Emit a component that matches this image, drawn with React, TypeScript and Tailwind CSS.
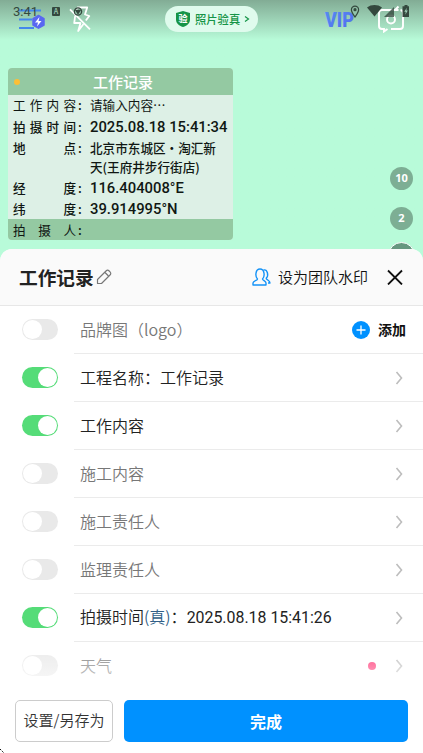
import clsx from "clsx";

interface WatermarkField {
  label: string;
  value: string;
  light?: boolean;
  className: string;
}

interface SettingItem {
  label: string;
  enabled: boolean;
  verified?: boolean;
  value?: string;
  action?: "add";
  dot?: boolean;
}

const watermarkFields: WatermarkField[] = [
  { label: "工作内容", value: "请输入内容⋯", light: true, className: "h-[21px] leading-[20px]" },
  { label: "拍摄时间", value: "2025.08.18 15:41:34", className: "h-[22px] leading-[22px]" },
  { label: "地点", value: "北京市东城区・淘汇新天(王府井步行街店)", className: "h-[39px] leading-[19px]" },
  { label: "经度", value: "116.404008°E", className: "h-[21px] leading-[22px]" },
  { label: "纬度", value: "39.914995°N", className: "h-[21px] leading-[22px]" },
];

const settings: SettingItem[] = [
  { label: "品牌图（logo）", enabled: false, action: "add" },
  { label: "工程名称：工作记录", enabled: true },
  { label: "工作内容", enabled: true },
  { label: "施工内容", enabled: false },
  { label: "施工责任人", enabled: false },
  { label: "监理责任人", enabled: false },
  { label: "拍摄时间", enabled: true, verified: true, value: "2025.08.18 15:41:26" },
  { label: "天气", enabled: false, dot: true },
];

function StatusBar() {
  return (
    <div className="absolute inset-x-0 top-0 h-6 text-[#34483e]">
      <span className="absolute left-[13px] top-1 font-['Roboto',sans-serif] text-[13px] leading-4">
        3:41
      </span>
      <span className="absolute left-[52px] top-[7px] flex h-[9px] w-2 items-center justify-center rounded-[1px] bg-[#34483e] text-[7px] font-bold text-[#91bfa8]">
        A
      </span>
      <svg className="absolute left-[73px] top-[7px]" width="11" height="9" viewBox="0 0 11 9" fill="none" stroke="currentColor" strokeWidth="1.3">
        <circle cx="5" cy="4.5" r="3.6" />
        <path d="M3 3.5l2 3 2-3z" fill="currentColor" />
      </svg>
      <svg className="absolute left-[350px] top-[5px]" width="10" height="13" viewBox="0 0 10 13" fill="none" stroke="currentColor" strokeWidth="1.2">
        <path d="M5 12C3 9 1.4 7 1.4 4.7a3.6 3.6 0 0 1 7.2 0C8.6 7 7 9 5 12z" />
        <circle cx="5" cy="4.7" r="1" fill="currentColor" />
      </svg>
      <svg className="absolute left-[367px] top-[5px]" width="15" height="12" viewBox="0 0 15 12" fill="currentColor">
        <path d="M0 2.5C4.2-.8 10.8-.8 15 2.5L7.5 11.5z" />
      </svg>
      <svg className="absolute left-[384px] top-[7px]" width="11" height="10" viewBox="0 0 11 10" fill="currentColor">
        <path d="M10 0v10H0z" opacity=".8" />
      </svg>
      <svg className="absolute left-[402px] top-[5px]" width="8" height="12" viewBox="0 0 8 12">
        <path d="M2.5 0h3v1.2H7v10.8H.5V1.2h2z" fill="currentColor" />
        <path d="M4.8 2.8 2.3 6.8h1.5l-.5 3 2.5-4.2H4.3z" fill="#a0d0b8" />
      </svg>
    </div>
  );
}

function CameraToolbar() {
  return (
    <div className="flex h-[38px] items-center px-[18px]">
      <svg width="28" height="26" viewBox="0 0 28 26" fill="none">
        <path d="M1 4.5h22M1 13.5h13M1 22h15" stroke="#4488ed" strokeWidth="2" />
        <path d="M20.5 9.5l5.5 3.2v6.3l-5.5 3.2-5.5-3.2v-6.3z" fill="#5967f1" stroke="#5967f1" strokeWidth="1.5" strokeLinejoin="round" />
        <path d="M21.5 11l-4.5 5.5h3l-1 4 4.5-5.5h-3z" fill="#fff" />
      </svg>
      <svg className="ml-[22px]" width="24" height="28" viewBox="0 0 24 28" fill="none" stroke="#fff" strokeWidth="1.8" strokeLinejoin="round">
        <path d="M8.5 5l1-2.5h9.7L17 9.5l4.3 1.5-3.5 4.5M15.5 19l-5.3 7 2.3-8H6.2l1-7.500" />
        <path d="M2 4.3l20 20" />
      </svg>
      <div className="ml-[73px] flex h-[26px] w-[93px] items-center rounded-full bg-[#dffbed] pl-[11px]">
        <svg width="14" height="16" viewBox="0 0 14 16">
          <path d="M7 0 14 2v6.5c0 3.5-2.5 6-7 7.5-4.5-1.5-7-4-7-7.5V2z" fill="#159447" />
          <text x="7" y="11" textAnchor="middle" fontSize="9" fontWeight="700" fill="#fff">验</text>
        </svg>
        <span className="ml-[5px] text-[11.3px] font-medium text-[#159447]">照片验真</span>
        <svg className="ml-1" width="6" height="8" viewBox="0 0 6 8" fill="none" stroke="#159447" strokeWidth="1.2">
          <path d="M1 1.5L4.5 4 1 6.5" />
        </svg>
      </div>
      <svg className="ml-[66px]" width="44" height="36" viewBox="0 0 44 36">
        <defs>
          <linearGradient id="vip" x1="0" y1="0" x2="1" y2="1">
            <stop offset="0" stopColor="#568ff0" />
            <stop offset="1" stopColor="#5268f0" />
          </linearGradient>
        </defs>
        <text x="1" y="26" textLength="29" lengthAdjust="spacingAndGlyphs" fontFamily="Roboto, sans-serif" fontSize="21" fontWeight="900" fill="url(#vip)">VIP</text>
      </svg>
      <svg className="ml-[9px]" width="28" height="28" viewBox="0 0 28 28" fill="none" stroke="#fff" strokeWidth="1.9">
        <path d="M21.5 5H5a3 3 0 0 0-3 3v13a3 3 0 0 0 3 3h2v2.5l3.5-2.5" />
        <path d="M14 24h9a3 3 0 0 0 3-3V8a3 3 0 0 0-2.5-3M21.5 1.5 18 5" />
        <circle cx="14" cy="14.5" r="4" />
      </svg>
    </div>
  );
}

function SpreadLabel({ text }: { text: string }) {
  return (
    <div className="flex w-[70px] shrink-0">
      <div className="flex w-[63px] justify-between">
        {text.split("").map((char) => (
          <span key={char}>{char}</span>
        ))}
      </div>
      <span className="pl-[2px] font-medium">:</span>
    </div>
  );
}

function WatermarkCard() {
  return (
    <div className="ml-2 mt-[30px] w-[225px] overflow-hidden rounded-[4px] bg-[#ddf0e6] text-[12.6px] font-medium text-[#101713]">
      <div className="flex h-[27px] items-center bg-[#94c9a2] pl-[6px]">
        <span className="h-[6px] w-[6px] rounded-full bg-[#fcbf36]" />
        <span className="flex-1 pr-[7px] pt-[2px] text-center text-[15px] text-white">工作记录</span>
      </div>
      <div className="h-[124px]">
        {watermarkFields.map((field) => (
          <div key={field.label} className={clsx("flex pl-[5px]", field.className, field.light && "font-normal")}>
            <SpreadLabel text={field.label} />
            <span
              className={clsx(
                "ml-[7px]",
                /^\d/.test(field.value)
                  ? "whitespace-nowrap font-['Roboto','Noto_Sans_CJK_SC',sans-serif] text-[14.8px]"
                  : "w-[132px]",
              )}
            >
              {field.value}
            </span>
          </div>
        ))}
      </div>
      <div className="flex h-[21px] bg-[#94c9a2] pl-[5px] font-normal leading-[21px]">
        <SpreadLabel text="拍摄人" />
      </div>
    </div>
  );
}

function ZoomLevels() {
  return (
    <div className="absolute left-[390px] top-[167px] flex flex-col gap-[17px] font-['Open_Sans',sans-serif] text-[11px] font-bold text-white">
      <span className="flex h-[23px] w-[23px] items-center justify-center rounded-full bg-[#7dae94]">10</span>
      <span className="flex h-[23px] w-[23px] items-center justify-center rounded-full bg-[#7dae94]">2</span>
      <span className="-ml-[2px] -mt-[5px] h-[27px] w-[27px] rounded-full border border-white bg-[#679780]" />
    </div>
  );
}

function Toggle({ on }: { on: boolean }) {
  return (
    <span
      className={clsx(
        "flex h-[21px] w-[36px] shrink-0 items-center rounded-full p-px",
        on ? "justify-end bg-[#55dc78]" : "bg-[#e9e9e9]",
      )}
    >
      <span className="h-[19px] w-[19px] rounded-full bg-white" />
    </span>
  );
}

function Chevron() {
  return (
    <svg width="8" height="14" viewBox="0 0 8 14" fill="none" stroke="#bdbdbd" strokeWidth="1.6">
      <path d="M1.5 1l5 6-5 6" />
    </svg>
  );
}

function SettingRow({ item }: { item: SettingItem }) {
  return (
    <div className="flex h-12 shrink-0 pl-[22px]">
      <div className="flex w-[52px] items-center pb-[2px]">
        <Toggle on={item.enabled} />
      </div>
      <div
        className={clsx(
          "flex flex-1 items-center border-b border-[#ebebeb] pl-[6px]",
          item.action ? "pr-[17px]" : "pr-5",
          item.enabled ? "text-[#222]" : "text-[#777]",
        )}
      >
        <span className="flex-1 whitespace-nowrap pb-px text-[16px] font-[350]">
          {item.label}
          {item.verified && (
            <>
              <span className="text-[#315f87]">(真)</span>：
            </>
          )}
          {item.value && <span className="font-['Roboto',sans-serif] text-[15.9px] font-normal">{item.value}</span>}
        </span>
        {item.dot && <span className="mr-[19px] h-2 w-2 rounded-full bg-[#ff2f70]" />}
        {item.action ? (
          <div className="flex items-center">
            <svg width="18" height="18" viewBox="0 0 18 18">
              <circle cx="9" cy="9" r="9" fill="#0091ff" />
              <path d="M4.5 9h9M9 4.5v9" stroke="#fff" strokeWidth="1.3" />
            </svg>
            <span className="ml-2 text-[14px] font-bold text-[#111]">添加</span>
          </div>
        ) : (
          <Chevron />
        )}
      </div>
    </div>
  );
}

function SheetHeader() {
  return (
    <div className="flex h-[57px] shrink-0 items-center border-b border-[#e7e7e7] bg-[#fafafa] pl-[19px] pr-5">
      <h1 className="pt-px text-[18.7px] font-bold text-[#222]">工作记录</h1>
      <svg className="ml-[2px]" width="16" height="16" viewBox="0 0 16 16" fill="none" stroke="#777" strokeWidth="1.2" strokeLinejoin="round">
        <path d="M1.5 14.5v-4L10 2c1-1 2.2-1 3.2 0l.8.8c1 1 1 2.2 0 3.2l-8.500 8.500z" />
        <path d="M9 3.5 12.5 7" />
      </svg>
      <div className="ml-auto flex items-center">
        <svg width="19" height="18" viewBox="0 0 19 18" fill="none" stroke="#1593f7" strokeWidth="1.4" strokeLinejoin="round">
          <path d="M1 17v-2c0-2 4.5-2.5 4.5-4C3 8.5 3.2 1 8 1s5 7.5 2.500 10c0 1.5 3.5 2 3.5 4v2z" />
          <path d="M11.5 2c4-1 5.5 5.5 2.700 8.200 0 1.600 3.800 2.300 3.800 4.800h-2" />
        </svg>
        <span className="ml-[7px] pt-px text-[15px] font-[350] text-[#111]">设为团队水印</span>
        <svg className="ml-[19px]" width="16" height="16" viewBox="0 0 16 16" stroke="#111" strokeWidth="1.8">
          <path d="M1 1.5l14 14M15 1.5l-14 14" />
        </svg>
      </div>
    </div>
  );
}

export default function App() {
  return (
    <div className="relative flex h-[753px] w-[423px] flex-col overflow-hidden bg-[#b8fbd9] font-['Noto_Sans_CJK_SC',sans-serif]">
      <div className="h-[249px] shrink-0 bg-linear-to-b from-[#82ac95] to-[#b8fbd9] to-[40px]">
        <CameraToolbar />
        <WatermarkCard />
      </div>
      <StatusBar />
      <ZoomLevels />
      <div className="relative flex min-h-0 flex-1 flex-col overflow-hidden rounded-t-[12px] bg-white">
        <SheetHeader />
        <div className="relative flex h-[382px] flex-col overflow-hidden">
          {settings.map((item) => (
            <SettingRow key={item.label} item={item} />
          ))}
          <div className="absolute inset-x-0 bottom-0 h-[46px] bg-linear-to-b from-white/0 to-white/75" />
        </div>
        <div className="mt-3 flex h-[42px] gap-[11px] px-[15px] text-[16px]">
          <button className="w-[98px] rounded-[5px] border border-[#ccc] pb-px text-[15px] font-[350] text-[#333]">
            设置/另存为
          </button>
          <button className="flex-1 rounded-[5px] bg-[#0091ff] pb-px font-bold text-white">完成</button>
        </div>
      </div>
      <svg className="absolute bottom-0 left-0" width="5" height="5" viewBox="0 0 5 5" stroke="#111" strokeWidth="1">
        <path d="M0 1l4 4" strokeDasharray="1.5 1" />
      </svg>
    </div>
  );
}
